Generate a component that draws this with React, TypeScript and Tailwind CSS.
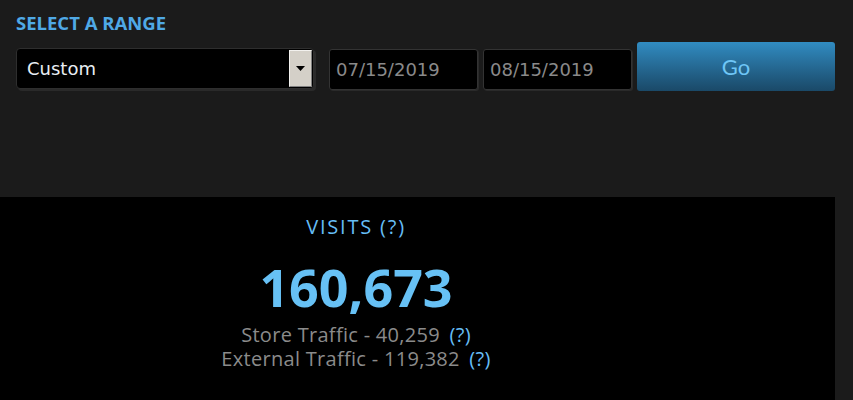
export default function App() {
  return (
    <div className="w-[853px] h-[400px] bg-[#1b1b1b] overflow-hidden" style={{ fontFamily: '"Open Sans", sans-serif' }}>
      {/* Range picker */}
      <div className="h-[197px] pl-4 pt-[11px]">
        <h2 className="text-[18.5px] font-bold text-[#4fa9e6] leading-[24px]">SELECT A RANGE</h2>
        <div className="flex items-start mt-[7px]">
          <div className="mt-[6px] w-[298px] h-[41px] flex items-stretch bg-black rounded-[4px] border border-[#2e2e2e] shadow-[2px_2px_0_#2a2a2a] font-['DejaVu_Sans',sans-serif]">
            <span className="flex-1 pl-[10px] flex items-center text-[18px] text-[#e8eef3]">Custom</span>
            <span className="w-[23px] my-[1px] mr-[1px] bg-[#d4d0c8] border-l border-t border-white/70 border-r border-b border-r-[#808080] border-b-[#808080] flex items-center justify-center">
              <svg width="9" height="5" viewBox="0 0 9 5"><path d="M0 0h9L4.5 5z" fill="#000" /></svg>
            </span>
          </div>
          <DateInput value="07/15/2019" className="ml-[15px]" />
          <DateInput value="08/15/2019" className="ml-[5px]" />
          <button className="ml-[5px] w-[198px] h-[49px] rounded-[3px] bg-gradient-to-b from-[#318cc2] to-[#1a4968] text-[#6fc6f6] text-[22px]" style={{ fontFamily: 'Lato, sans-serif' }}>
            Go
          </button>
        </div>
      </div>

      {/* Visits panel */}
      <div className="w-[835px] h-[203px] bg-black">
        <div className="w-[712px] flex flex-col items-center pt-[16px]">
          <div className="text-[20px] tracking-[1.8px] text-[#66bdf5] leading-[28px]">VISITS (?)</div>
          <div className="mt-[20px] text-[52px] font-bold text-[#67c1f5] leading-[52px]">160,673</div>
          <div className="mt-[10px] text-[20px] tracking-[0.3px] leading-[24px] text-[#8b8b8b] text-center">
            <div>Store Traffic - 40,259 <span className="ml-[4px] text-[#66bdf5]">(?)</span></div>
            <div>External Traffic - 119,382 <span className="ml-[4px] text-[#66bdf5]">(?)</span></div>
          </div>
        </div>
      </div>
    </div>
  );
}

function DateInput({ value, className }: { value: string; className?: string }) {
  return (
    <div className={`${className} mt-[7px] w-[149px] h-[41px] bg-black rounded-[3px] border border-[#333] shadow-[1px_1px_0_#2a2a2a] flex items-center pl-[6px] text-[18px] text-[#8a8a8a] font-['DejaVu_Sans',sans-serif]`}>
      {value}
    </div>
  );
}
